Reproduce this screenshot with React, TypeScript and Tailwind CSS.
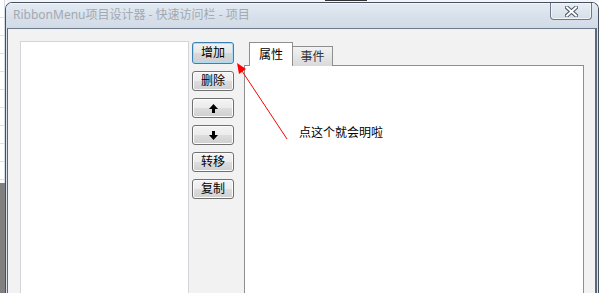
import React from "react";

const cjk = "font-['Noto_Sans','Noto_Sans_CJK_SC',sans-serif]";

function ArrowIcon({ up }: { up: boolean }) {
  return (
    <svg width="9" height="9" viewBox="0 0 9 9" className={up ? "" : "rotate-180"}>
      <polygon points="4.5,0 9,5 0,5" fill="#000" />
      <rect x="3" y="5" width="3" height="4" fill="#000" />
    </svg>
  );
}

function Btn({ children, focused }: { children: React.ReactNode; focused?: boolean }) {
  return (
    <div
      className={
        focused
          ? "h-[22px] flex items-center justify-center rounded-[3px] border border-[#3c7fb1] shadow-[inset_0_0_0_1px_#a9dcf6] bg-[linear-gradient(#f2f2f2,#e6e6e6_50%,#d8d8d8_51%,#cfcfcf)] text-[12px] text-black"
          : "h-[20px] flex items-center justify-center rounded-[3px] border border-[#707070] shadow-[inset_0_0_0_1px_#fcfcfc] bg-[linear-gradient(#f4f4f4,#ebebeb_50%,#dddddd_51%,#cfcfcf)] text-[12px] text-black"
      }
    >
      {children}
    </div>
  );
}

export default function App() {
  return (
    <div className={`relative w-[599px] h-[293px] overflow-hidden bg-white flex ${cjk}`}>
      {/* background strip on the left */}
      <div className="w-[5px] flex flex-col">
        <div className="h-[183px] border-r border-[#d6dce4] bg-[repeating-linear-gradient(to_bottom,#ffffff_0px,#ffffff_17px,#dde3ec_17px,#dde3ec_18px)]" />
        <div className="flex-1 bg-[#808080]" />
      </div>

      <div className="flex-1 flex flex-col">
        {/* bit of background above the window */}
        <div className="h-[2px] bg-[#f3f5f8] flex">
          <div className="ml-[320px] w-[42px] h-[1px] bg-[#333]" />
        </div>

        {/* window */}
        <div className="flex-1 flex flex-col border border-b-0 border-[#46505e] rounded-t-[7px] bg-[#d9e2ec] overflow-hidden">
          {/* title bar */}
          <div className="h-[25px] flex justify-between bg-[linear-gradient(#e3eaf2,#d7e0ea_60%,#d1dbe6)] shadow-[inset_0_1px_0_#f4f7fa]">
            <div className="pl-[7px] pt-[4px] text-[12px] leading-[16px] text-[#a4a9b1]">
              RibbonMenu项目设计器 - 快速访问栏 - 项目
            </div>
            <div className="mr-[6px] w-[42px] h-[17px] flex items-center justify-center rounded-b-[4px] border border-t-0 border-[#6d7a8c] bg-[linear-gradient(#e8eef4,#d5dee8)] shadow-[inset_0_0_0_1px_#f2f5f8]">
              <svg width="13" height="11" viewBox="0 0 13 11">
                <path d="M2 1.5 L11 9.5 M11 1.5 L2 9.5" stroke="#4d5866" strokeWidth="4" strokeLinecap="square" />
                <path d="M2 1.5 L11 9.5 M11 1.5 L2 9.5" stroke="#ffffff" strokeWidth="2" strokeLinecap="square" />
              </svg>
            </div>
          </div>

          {/* client area */}
          <div className="flex-1 flex ml-[1px] mr-[1px] border-t border-l border-r-2 border-[#5c6878] border-t-[#6d7a8c] bg-[#f2f2f2]">
            {/* list box */}
            <div className="ml-[12px] mt-[12px] w-[169px] border border-b-0 border-[#d4d4dc] bg-white" />

            {/* buttons */}
            <div className="ml-[3px] w-[42px] pt-[13px] flex flex-col gap-[7px]">
              <Btn focused>增加</Btn>
              <Btn>删除</Btn>
              <Btn>
                <ArrowIcon up />
              </Btn>
              <Btn>
                <ArrowIcon up={false} />
              </Btn>
              <Btn>转移</Btn>
              <Btn>复制</Btn>
            </div>

            {/* tabs */}
            <div className="ml-[10px] w-[340px] pt-[13px] flex flex-col">
              <div className="relative z-10 flex items-end pl-[5px] -mb-px">
                <div className="w-[44px] h-[24px] flex items-center justify-center border border-b-0 border-[#8e8f8f] bg-white text-[12px] text-black">
                  属性
                </div>
                <div className="w-[40px] h-[20px] flex items-center justify-center border border-l-0 border-b-0 border-[#8e8f8f] bg-[linear-gradient(#f2f2f2,#e6e6e6_50%,#d9d9d9)] text-[12px] text-[#333]">
                  事件
                </div>
              </div>
              <div className="flex-1 border border-b-0 border-[#8e8f8f] bg-white" />
            </div>
          </div>
        </div>
      </div>

      {/* annotation overlay */}
      <svg className="absolute left-0 top-0 pointer-events-none" width="599" height="293">
        <line x1="287" y1="139" x2="242" y2="71" stroke="#ff0000" strokeWidth="1" />
        <polygon points="237,63 246,69 239,74" fill="#ff0000" />
      </svg>
      <div className="absolute left-[299px] top-[126px] text-[12px] leading-[14px] text-black">
        点这个就会明啦
      </div>
    </div>
  );
}
